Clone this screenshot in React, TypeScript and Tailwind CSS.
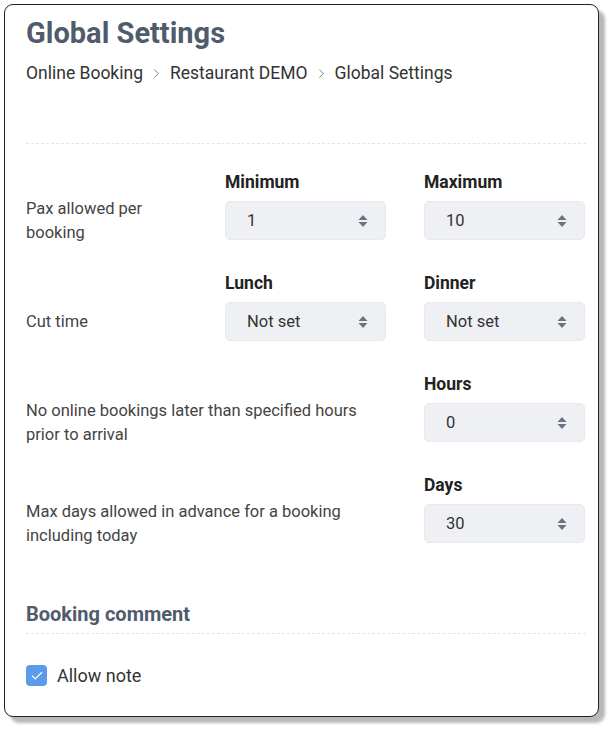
import { Check, ChevronRight } from "lucide-react";

function SortIcon() {
  return (
    <svg width="10" height="16" viewBox="0 0 10 16" className="text-[#6b7280]">
      <path d="M5 2 L9.5 7 H0.5 Z" fill="currentColor" />
      <path d="M5 14 L9.5 9 H0.5 Z" fill="currentColor" />
    </svg>
  );
}

function Select({ value }: { value: string }) {
  return (
    <div className="flex h-[39px] items-center justify-between rounded-[5px] border border-[#e8e9ee] bg-[#eff0f4] pl-[21px] pr-[17px] text-[16.5px] text-[#333]">
      <span>{value}</span>
      <SortIcon />
    </div>
  );
}

function Header({ children }: { children: string }) {
  return <div className="mb-[7px] text-[17.5px] font-bold leading-6 text-[#222]">{children}</div>;
}

function Label({ children, wide }: { children: string; wide?: boolean }) {
  return (
    <div className={wide ? "col-span-2 flex h-[39px] items-center pr-[15px]" : "flex h-[39px] items-center"}>
      <div>{children}</div>
    </div>
  );
}

function Divider() {
  return <div className="border-t border-dashed border-[#e2e6ec]" />;
}

export default function App() {
  return (
    <div className="bg-white p-1 font-['Roboto',sans-serif]" style={{ height: 731 }}>
      <div className="flex h-[713px] w-[595px] flex-col rounded-[9px] border border-[#222] bg-white pl-[21px] pr-[12px] pt-[10px] shadow-[6px_6px_3px_rgba(0,0,0,0.28)]">
        <h1 className="text-[29px] font-bold leading-9 text-[#505c6b]">Global Settings</h1>
        <nav className="mt-[10px] flex items-center text-[17.5px] leading-6 text-[#333]">
          <span>Online Booking</span>
          <ChevronRight size={15} strokeWidth={1.5} className="mx-[6px] text-[#777]" />
          <span>Restaurant DEMO</span>
          <ChevronRight size={15} strokeWidth={1.5} className="mx-[6px] text-[#777]" />
          <span>Global Settings</span>
        </nav>
        <div className="mt-[58px]">
          <Divider />
        </div>

        <div className="mt-[26px] grid grid-cols-[161px_161px_161px] gap-x-[38px] text-[16.5px] leading-6 text-[#444]">
          <div />
          <Header>Minimum</Header>
          <Header>Maximum</Header>
          <Label>Pax allowed per booking</Label>
          <Select value="1" />
          <Select value="10" />

          <div className="col-span-3 h-[31px]" />
          <div />
          <Header>Lunch</Header>
          <Header>Dinner</Header>
          <Label>Cut time</Label>
          <Select value="Not set" />
          <Select value="Not set" />

          <div className="col-span-3 h-[31px]" />
          <div className="col-span-2" />
          <Header>Hours</Header>
          <Label wide>No online bookings later than specified hours prior to arrival</Label>
          <Select value="0" />

          <div className="col-span-3 h-[31px]" />
          <div className="col-span-2" />
          <Header>Days</Header>
          <Label wide>Max days allowed in advance for a booking including today</Label>
          <Select value="30" />
        </div>

        <h2 className="mt-[57px] text-[20px] font-bold leading-7 text-[#505c6b]">Booking comment</h2>
        <div className="mt-[5px]">
          <Divider />
        </div>
        <label className="mt-[28px] flex items-center gap-[10px] text-[18px] text-[#333]">
          <span className="flex h-[21px] w-[21px] items-center justify-center rounded-[4px] bg-[#5b9cea]">
            <Check size={14} strokeWidth={2} className="text-white" />
          </span>
          Allow note
        </label>
      </div>
    </div>
  );
}
